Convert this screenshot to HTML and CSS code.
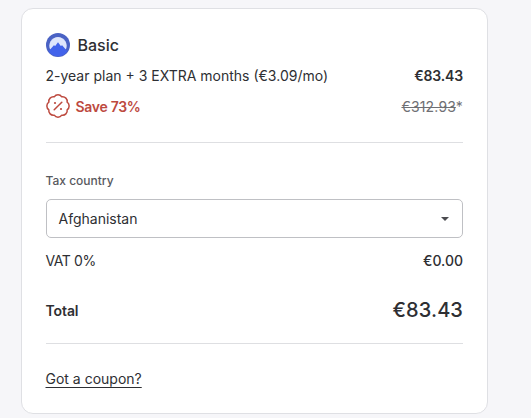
FILE: index.html
```html
<!DOCTYPE html>
<html lang="en">
<head>
    <meta charset="UTF-8">
    <title>Order summary</title>
    <link rel="stylesheet" href="styles.css">
</head>
<body>
    <div class="card">
        <div class="plan-header">
            <svg class="icon" viewBox="0 0 24 24">
                <circle cx="12" cy="12" r="12" fill="#4a62c4"/>
                <path d="M4.2 16.6A8.7 8.7 0 1 1 19.8 16.6Z" fill="#dfe6fc"/>
                <path d="M2.6 18.2L7.9 12.2 9.2 13 12 9.2 14.8 13 16.1 12.2 21.4 18.2A11.3 11.3 0 0 1 2.6 18.2Z" fill="#4263eb"/>
            </svg>
            <h2>Basic</h2>
        </div>

        <div class="row plan-row">
            <span class="plan-name">2-year plan + 3 EXTRA months (€3.09/mo)</span>
            <span class="price">€83.43</span>
        </div>

        <div class="row save-row">
            <span class="save">
                <svg class="icon" viewBox="0 0 24 24" fill="none" stroke="#bd4a3f" stroke-width="1.5" stroke-linecap="round" stroke-linejoin="round">
                    <path d="M8.21 2.85A4.6 4.6 0 0 1 15.79 2.85A4.6 4.6 0 0 1 21.15 8.21A4.6 4.6 0 0 1 21.15 15.79A4.6 4.6 0 0 1 15.79 21.15A4.6 4.6 0 0 1 8.21 21.15A4.6 4.6 0 0 1 2.85 15.79A4.6 4.6 0 0 1 2.85 8.21A4.6 4.6 0 0 1 8.21 2.85Z"/>
                    <path d="M8.2 15.8L15.8 8.2"/>
                    <circle cx="9" cy="9" r="1.1" fill="#bd4a3f" stroke="none"/>
                    <circle cx="15" cy="15" r="1.1" fill="#bd4a3f" stroke="none"/>
                </svg>
                <span class="save-text">Save 73%</span>
            </span>
            <span class="old-price"><s>€312.93</s>*</span>
        </div>

        <hr>

        <div class="label">Tax country</div>
        <div class="select">
            <span>Afghanistan</span>
            <span class="arrow"></span>
        </div>

        <div class="row vat-row">
            <span class="vat">VAT 0%</span>
            <span class="vat-price">€0.00</span>
        </div>

        <div class="row total-row">
            <span class="total">Total</span>
            <span class="total-price">€83.43</span>
        </div>

        <hr class="bottom-line">

        <a class="coupon">Got a coupon?</a>
    </div>
</body>
</html>
```

FILE: styles.css
```css
* { box-sizing: border-box; }
body { margin: 0; padding: 8px 0 0 21px; background: #f6f6f9; color: #2e2f33; font-family: Inter, sans-serif; font-size: 14px; line-height: 20px; overflow: hidden; }
.card { width: 467px; height: 406px; padding: 24px; background: #fff; border: 1px solid #dfe0e4; border-radius: 12px; }
.row { display: flex; justify-content: space-between; align-items: center; }
.icon { width: 24px; height: 24px; flex: none; }
.plan-header { display: flex; align-items: center; gap: 7.5px; height: 24px; }
h2 { margin: 0; font-size: 16px; font-weight: 500; line-height: 24px; }
.plan-row { margin-top: 9px; }
.plan-name { margin-left: -0.5px; }
.price { font-weight: 600; letter-spacing: -0.15px; }
.save-row { margin-top: 8px; height: 24px; }
.save { display: flex; align-items: center; gap: 5.5px; color: #bd4a3f; font-weight: 600; letter-spacing: -0.3px; }
.save-text, .old-price { padding-top: 2px; }
.old-price { color: #6f7074; letter-spacing: 0.15px; }
hr { height: 1px; margin: 24px 0 0; border: 0; background: #dedfe2; }
.label { margin: 28px 0 0 -0.5px; font-size: 12px; font-weight: 500; color: #58595e; }
.select { display: flex; align-items: center; justify-content: space-between; height: 39px; margin-top: 8px; padding: 0 13px 0 11.5px; border: 1px solid #bfc0c4; border-radius: 5px; }
.arrow { border: 4px solid transparent; border-top-color: #4b4c50; border-bottom: 0; }
.vat-row { margin-top: 13px; }
.vat { margin-left: -0.5px; letter-spacing: -0.4px; }
.vat-price { font-weight: 500; }
.total-row { margin-top: 24px; height: 30px; }
.total { margin-left: -0.5px; padding-top: 2px; font-weight: 600; letter-spacing: -0.1px; }
.total-price { font-size: 20px; font-weight: 500; letter-spacing: 0.1px; }
.bottom-line { margin-top: 18px; }
.coupon { display: inline-block; margin: 25px 0 0 -0.5px; text-decoration: underline; text-underline-offset: 3px; }
```
